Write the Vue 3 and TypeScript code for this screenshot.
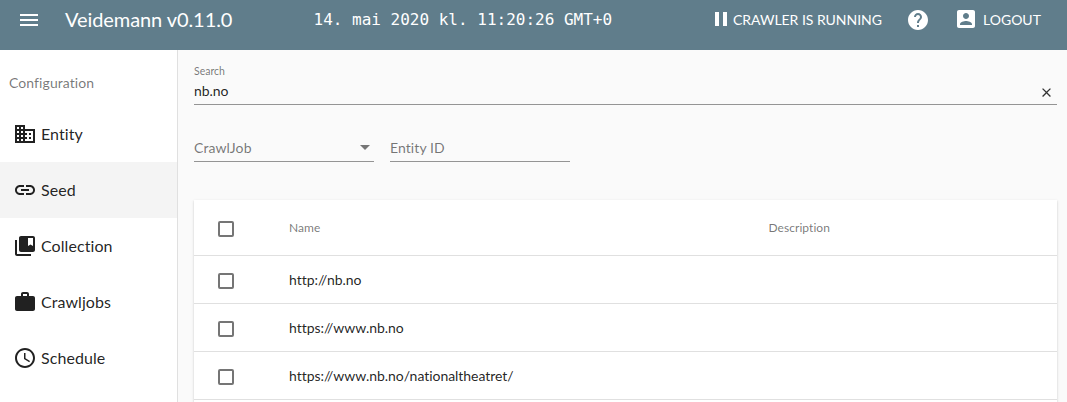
<script setup lang="ts">
import { ref } from 'vue'

interface NavItem {
  label: string
  icon: string
}

const navItems: NavItem[] = [
  {
    label: 'Entity',
    icon: 'M12 7V3H2v18h20V7H12zM6 19H4v-2h2v2zm0-4H4v-2h2v2zm0-4H4V9h2v2zm0-4H4V5h2v2zm4 12H8v-2h2v2zm0-4H8v-2h2v2zm0-4H8V9h2v2zm0-4H8V5h2v2zm10 12h-8v-2h2v-2h-2v-2h2v-2h-2V9h8v10zm-2-8h-2v2h2v-2zm0 4h-2v2h2v-2z',
  },
  {
    label: 'Seed',
    icon: 'M3.9 12c0-1.71 1.39-3.1 3.1-3.1h4V7H7c-2.76 0-5 2.24-5 5s2.24 5 5 5h4v-1.9H7c-1.71 0-3.1-1.39-3.1-3.1zM8 13h8v-2H8v2zm9-6h-4v1.9h4c1.71 0 3.1 1.39 3.1 3.1s-1.39 3.1-3.1 3.1h-4V17h4c2.76 0 5-2.24 5-5s-2.24-5-5-5z',
  },
  {
    label: 'Collection',
    icon: 'M4 6H2v14c0 1.1.9 2 2 2h14v-2H4V6zm16-4H8c-1.1 0-2 .9-2 2v12c0 1.1.9 2 2 2h12c1.1 0 2-.9 2-2V4c0-1.1-.9-2-2-2zm0 10l-2.5-1.5L15 12V4h5v8z',
  },
  {
    label: 'Crawljobs',
    icon: 'M20 6h-4V4c0-1.11-.89-2-2-2h-4c-1.11 0-2 .89-2 2v2H4c-1.11 0-1.99.89-1.99 2L2 19c0 1.11.89 2 2 2h16c1.11 0 2-.89 2-2V8c0-1.11-.89-2-2-2zm-6 0h-4V4h4v2z',
  },
  {
    label: 'Schedule',
    icon: 'M11.99 2C6.47 2 2 6.48 2 12s4.47 10 9.99 10C17.52 22 22 17.52 22 12S17.52 2 11.99 2zM12 20c-4.42 0-8-3.58-8-8s3.58-8 8-8 8 3.58 8 8-3.58 8-8 8zm.5-13H11v6l5.25 3.15.75-1.23-4.5-2.67z',
  },
]

const active = ref('Seed')
const query = ref('nb.no')
const seeds = ['http://nb.no', 'https://www.nb.no', 'https://www.nb.no/nationaltheatret/']
</script>

<template>
  <div class="app">
    <header class="toolbar">
      <svg class="icon menu" viewBox="0 0 24 24"><path d="M3 18h18v-2H3v2zm0-5h18v-2H3v2zm0-7v2h18V6H3z" /></svg>
      <span class="title">Veidemann v0.11.0</span>
      <span class="clock">14. mai 2020 kl. 11:20:26 GMT+0</span>
      <div class="actions">
        <svg class="icon pause" viewBox="0 0 24 24"><path d="M6 19h4V5H6v14zm8-14v14h4V5h-4z" /></svg>
        <span class="status">CRAWLER IS RUNNING</span>
        <svg class="icon help" viewBox="0 0 24 24"><path d="M12 2C6.48 2 2 6.48 2 12s4.48 10 10 10 10-4.48 10-10S17.52 2 12 2zm1 17h-2v-2h2v2zm2.07-7.75l-.9.92C13.45 12.9 13 13.5 13 15h-2v-.5c0-1.1.45-2.1 1.17-2.83l1.24-1.26c.37-.36.59-.86.59-1.41 0-1.1-.9-2-2-2s-2 .9-2 2H8c0-2.21 1.79-4 4-4s4 1.79 4 4c0 .88-.36 1.68-.93 2.25z" /></svg>
        <svg class="icon account" viewBox="0 0 24 24"><path d="M3 5v14c0 1.1.89 2 2 2h14c1.1 0 2-.9 2-2V5c0-1.1-.9-2-2-2H5c-1.11 0-2 .9-2 2zm12 4c0 1.66-1.34 3-3 3s-3-1.34-3-3 1.34-3 3-3 3 1.34 3 3zm-9 8c0-2 4-3.1 6-3.1s6 1.1 6 3.1v1H6v-1z" /></svg>
        <span class="logout">LOGOUT</span>
      </div>
    </header>

    <div class="body">
      <nav class="sidebar">
        <h3 class="subheader">Configuration</h3>
        <a
          v-for="item in navItems"
          :key="item.label"
          class="nav-item"
          :class="{ active: item.label === active }"
          @click="active = item.label"
        >
          <svg class="icon" viewBox="0 0 24 24"><path :d="item.icon" /></svg>
          <span class="nav-label">{{ item.label }}</span>
        </a>
      </nav>

      <main class="content">
        <div class="search">
          <label class="search-label">Search</label>
          <div class="search-row">
            <span class="search-value">{{ query }}</span>
            <svg class="clear" viewBox="0 0 24 24" @click="query = ''"><path d="M19 6.41L17.59 5 12 10.59 6.41 5 5 6.41 10.59 12 5 17.59 6.41 19 12 13.41 17.59 19 19 17.59 13.41 12z" /></svg>
          </div>
        </div>

        <div class="filters">
          <div class="field"><span>CrawlJob</span><i class="arrow"></i></div>
          <div class="field"><span>Entity ID</span></div>
        </div>

        <section class="table">
          <div class="row head">
            <span class="box"></span>
            <span>Name</span>
            <span>Description</span>
          </div>
          <div v-for="seed in seeds" :key="seed" class="row">
            <span class="box"></span>
            <span class="name">{{ seed }}</span>
            <span></span>
          </div>
          <div class="row"></div>
        </section>
      </main>
    </div>
  </div>
</template>

<style>
body {
  margin: 0;
  overflow: hidden;
}
</style>

<style scoped>
.app {
  display: flex;
  flex-direction: column;
  height: 402px;
  overflow: hidden;
  font-family: Lato, sans-serif;
  font-size: 14px;
  font-variant-ligatures: none;
  color: rgba(0, 0, 0, 0.87);
  background: #fafafa;
}
.icon {
  width: 24px;
  height: 24px;
  flex: none;
  fill: currentColor;
}
.toolbar {
  display: flex;
  align-items: center;
  flex: none;
  box-sizing: border-box;
  height: 50px;
  padding: 0 25.5px 10px 17px;
  background: #607d8b;
  color: #fff;
  white-space: nowrap;
}
.title {
  width: 248.5px;
  margin: -3px 0 0 24px;
  font-size: 20px;
  line-height: 24px;
  letter-spacing: -0.08px;
}
.clock {
  font: 16px/20px "DejaVu Sans Mono", monospace;
}
.actions {
  display: flex;
  align-items: center;
  margin-left: auto;
}
.pause {
  margin-top: -2px;
}
.status {
  width: 173px;
  margin-top: -2px;
  letter-spacing: -0.03px;
}
.account {
  margin: -2px 5.5px 0 23.5px;
}
.logout {
  width: 58.5px;
  margin-top: -2px;
}
.body {
  display: flex;
  flex: 1;
  min-height: 0;
}
.sidebar {
  flex: none;
  width: 177px;
  background: #fff;
  border-right: 1px solid #e0e0e0;
}
.subheader {
  margin: 0;
  padding-left: 9px;
  height: 56px;
  font-size: 14px;
  font-weight: 400;
  line-height: 66px;
  letter-spacing: 0.08px;
  color: rgba(0, 0, 0, 0.54);
}
.nav-item {
  display: flex;
  align-items: center;
  gap: 4px;
  height: 56px;
  padding-left: 13px;
  font-size: 16px;
}
.nav-label {
  padding-bottom: 2px;
  letter-spacing: 0.07px;
}
.nav-item.active {
  background: #f4f4f4;
}
.content {
  flex: 1;
  padding: 14px 10px 0 16px;
}
.search {
  height: 40px;
  border-bottom: 1px solid #949494;
}
.search-label {
  display: block;
  font-size: 10.5px;
  line-height: 14px;
  color: rgba(0, 0, 0, 0.54);
}
.search-row {
  display: flex;
  justify-content: space-between;
  align-items: center;
  height: 26px;
}
.search-value {
  line-height: 16px;
  letter-spacing: -0.05px;
}
.clear {
  width: 15px;
  height: 15px;
  margin: 3px 3px 0 0;
  fill: #333;
}
.filters {
  display: flex;
  gap: 16px;
  margin-top: 30px;
}
.field {
  display: flex;
  align-items: center;
  justify-content: space-between;
  box-sizing: border-box;
  width: 180px;
  height: 27px;
  padding: 0 4px 2px 0;
  border-bottom: 1px solid #949494;
  letter-spacing: 0.08px;
  color: rgba(0, 0, 0, 0.54);
}
.arrow {
  border: 5px solid transparent;
  border-top-color: #757575;
  border-bottom: 0;
}
.table {
  margin-top: 38px;
  background: #fff;
  box-shadow: 0 2px 1px -1px rgba(0, 0, 0, 0.2), 0 1px 1px rgba(0, 0, 0, 0.14), 0 1px 3px rgba(0, 0, 0, 0.12);
}
.row {
  display: grid;
  grid-template-columns: 71px 479.5px 1fr;
  align-items: center;
  box-sizing: border-box;
  height: 48px;
  padding-left: 24px;
  border-bottom: 1px solid #e0e0e0;
}
.row.head {
  height: 56px;
  font-size: 12px;
  letter-spacing: 0.05px;
  color: rgba(0, 0, 0, 0.54);
}
.name {
  letter-spacing: -0.04px;
}
.box {
  box-sizing: border-box;
  width: 16px;
  height: 16px;
  margin-top: 2px;
  border: 2px solid #757575;
  border-radius: 2px;
}
</style>
